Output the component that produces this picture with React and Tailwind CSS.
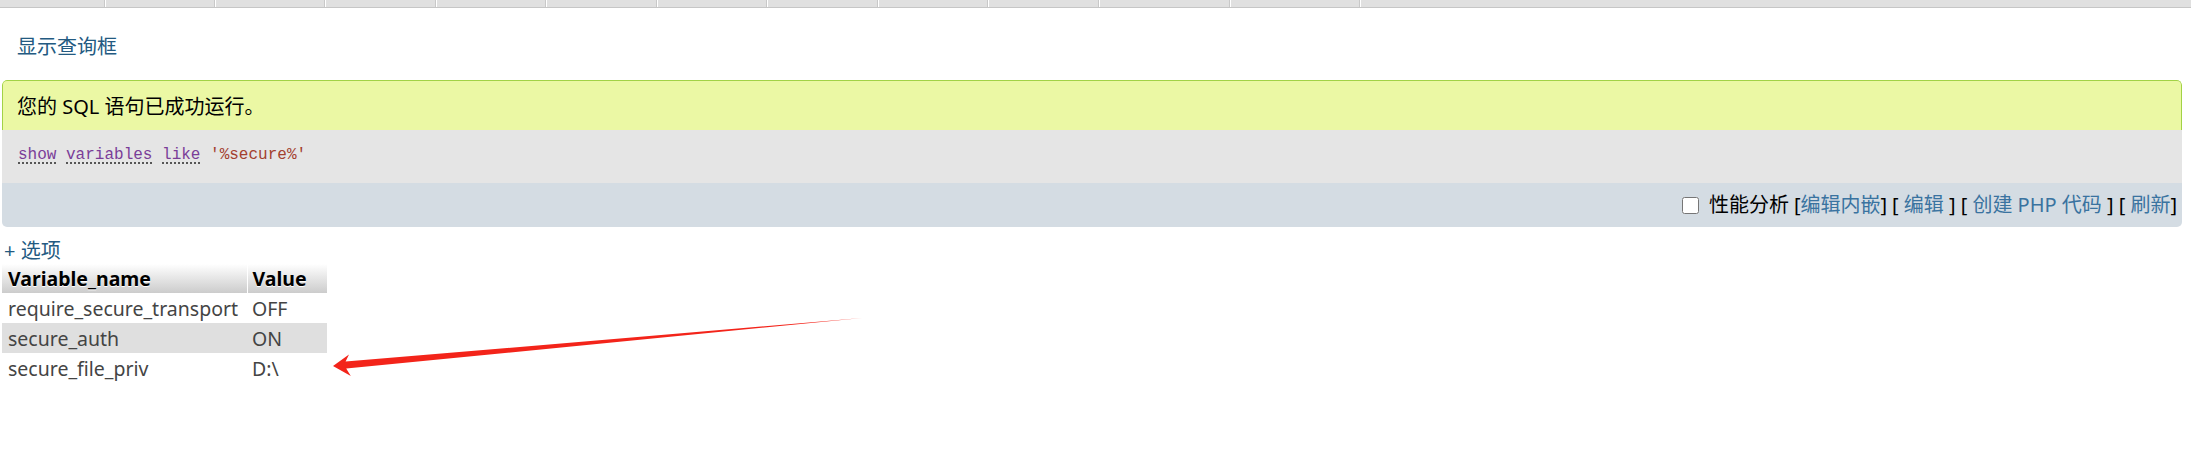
import React from 'react';

const tabs = [
  'w-[106px]', 'w-[110px]', 'w-[110px]', 'w-[111px]', 'w-[110px]', 'w-[111px]',
  'w-[110px]', 'w-[111px]', 'w-[110px]', 'w-[111px]', 'w-[131px]', 'w-[130px]',
];

const rows = [
  { name: 'require_secure_transport', value: 'OFF' },
  { name: 'secure_auth', value: 'ON' },
  { name: 'secure_file_priv', value: 'D:\\' },
];

const ArrowMark = () => (
  <svg
    className="absolute left-[320px] top-[300px]"
    width="560"
    height="80"
    viewBox="0 0 560 80"
  >
    <polygon
      points="13,66 29,54.5 25.6,61.6 542,18 26.2,68.6 30.8,76 "
      fill="#f3241a"
    />
  </svg>
);

const App = () => {
  return (
    <div
      className="relative h-[450px] w-full overflow-hidden bg-white text-black"
      style={{ fontFamily: '"Noto Sans", "Noto Sans CJK SC", sans-serif' }}
    >
      {/* top tab strip */}
      <div className="flex h-[8px] border-b border-[#c6c6c6] bg-[#e0e0e0]">
        {tabs.map((w, i) => (
          <div key={i} className={`${w} h-full border-r border-white shadow-[inset_-1px_0_0_#c8c8c8]`} />
        ))}
        <div className="flex-1" />
      </div>

      <div className="pl-[17px] pt-[24px] text-[20px] leading-[30px] text-[#235a81]">显示查询框</div>

      {/* result message */}
      <div className="ml-[2px] mr-[9px] mt-[18px] overflow-hidden rounded-[5px]">
        <div className="h-[50px] rounded-t-[5px] border border-b-0 border-[#a2d246] bg-[#ebf8a4] pl-[14px] pt-[11px] text-[20px] leading-[30px]">
          您的 SQL 语句已成功运行。
        </div>
        <div className="h-[53px] bg-[#e5e5e5] pl-[16px] pt-[13px] text-[16px] leading-[24px]" style={{ fontFamily: '"Liberation Mono", monospace' }}>
          <span className="text-[#7a3d98] underline decoration-dotted decoration-[#333] underline-offset-[4px]">show</span>{' '}
          <span className="text-[#7a3d98] underline decoration-dotted decoration-[#333] underline-offset-[4px]">variables</span>{' '}
          <span className="text-[#7a3d98] underline decoration-dotted decoration-[#333] underline-offset-[4px]">like</span>{' '}
          <span className="text-[#a3402f]">'%secure%'</span>
        </div>
        <div className="flex h-[44px] items-center justify-end bg-[#d4dce3] pr-[5px] text-[20px]">
          <input type="checkbox" className="mr-[10px] h-[17px] w-[17px]" />
          <span>性能分析</span>
          <span className="ml-[5px]">[<span className="text-[#3a73a0]">编辑内嵌</span>]</span>
          <span className="ml-[5px]">[ <span className="text-[#3a73a0]">编辑</span> ]</span>
          <span className="ml-[5px]">[ <span className="text-[#3a73a0]">创建 PHP 代码</span> ]</span>
          <span className="ml-[5px]">[ <span className="text-[#3a73a0]">刷新</span>]</span>
        </div>
      </div>

      <div className="pl-[4px] pt-[11px] text-[20px] leading-[26px] text-[#235a81]">+ 选项</div>

      {/* variables table */}
      <table className="ml-[2px] border-collapse text-[19.5px] text-[#444]">
        <thead>
          <tr className="h-[29px] bg-gradient-to-b from-white to-[#cccccc] text-left text-black">
            <th className="w-[245px] border-r border-white px-[6px] font-bold [text-shadow:0_1px_0_#fff]">Variable_name</th>
            <th className="w-[80px] px-[5px] font-bold [text-shadow:0_1px_0_#fff]">Value</th>
          </tr>
        </thead>
        <tbody>
          {rows.map((r, i) => (
            <tr key={r.name} className={`h-[30px] ${i % 2 === 1 ? 'bg-[#dfdfdf]' : 'bg-white'}`}>
              <td className="px-[6px]">{r.name}</td>
              <td className="px-[5px]">{r.value}</td>
            </tr>
          ))}
        </tbody>
      </table>

      <ArrowMark />
    </div>
  );
};

export default App;
